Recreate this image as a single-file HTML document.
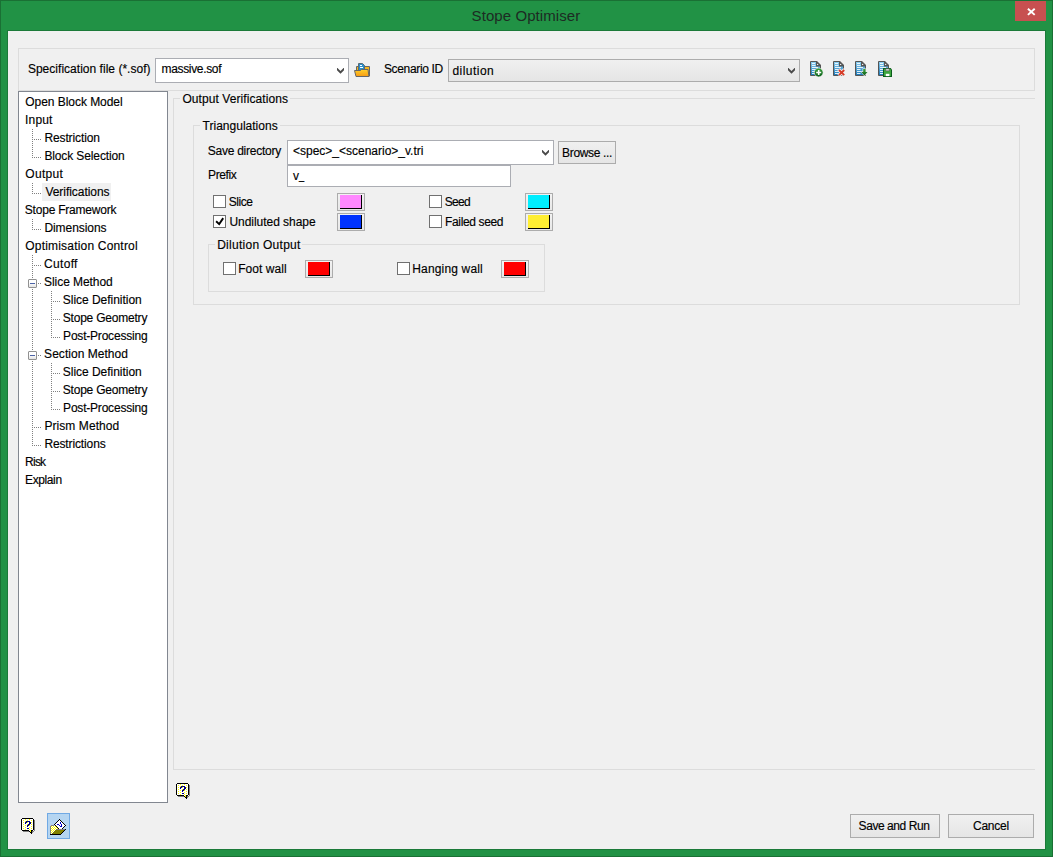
<!DOCTYPE html>
<html>
<head>
<meta charset="utf-8">
<title>Stope Optimiser</title>
<style>
html,body{margin:0;padding:0}
body{width:1053px;height:857px;position:relative;overflow:hidden;background:#219245;font-family:"Liberation Sans",sans-serif;font-size:12px;color:#000}
div,span,svg{position:absolute;box-sizing:border-box}
.frame{left:0;top:0;width:1053px;height:857px;border:1px solid #1a7034}
.client{left:7px;top:30px;width:1039px;height:820px;border:1px solid #1b7a39;background:#f0f0f0}
.close{left:1015px;top:1px;width:31px;height:20px;background:#c75050}
.t{white-space:pre;font-size:12px;line-height:16px;height:16px;-webkit-text-stroke:0.15px #000}
.t.title{font-size:15px;line-height:19px;height:19px;color:#1d2b23;-webkit-text-stroke:0}
.grp{border:1px solid #dcdcdc}
.lblbg{background:#f0f0f0}
.edit{background:#fff;border:1px solid #abadb3}
.btn{border:1px solid #acacac;background:linear-gradient(#f0f0f0,#e5e5e5)}
.tree{left:18px;top:91px;width:150px;height:712px;border:1px solid #828790;background:#fff}
.sel{left:42px;top:183px;width:69px;height:18px;background:#f0f0f0}
.cb{width:13px;height:13px;border:1px solid #707070;background:#fff}
.sw{width:28px;height:18px;border:1px solid #acacac;background:linear-gradient(#f2f2f2,#e8e8e8)}
.sw i{position:absolute;left:2px;top:1px;width:22px;height:14px;background:#000}
.sw b{position:absolute;left:2px;top:1px;width:21px;height:13px}
.hl{left:47px;top:813px;width:23px;height:26px;border:1px solid #70a9e4;background:#b5d5f1}
</style>
</head>
<body>
<div class="frame"></div>
<div class="client"></div>
<div class="close"><svg style="left:12px;top:7px" width="9" height="8" viewBox="0 0 9 8"><path d="M0.9,0.7 L7.7,6.9 M7.7,0.7 L0.9,6.9" stroke="#fff" stroke-width="1.9" fill="none"/></svg></div>

<!-- top toolbar -->
<div class="grp" style="left:18px;top:48px;width:1017px;height:43px"></div>
<div class="edit" style="left:155px;top:58px;width:194px;height:25px"></div>
<svg style="left:336px;top:67px" width="9" height="8" viewBox="0 0 9 8"><path d="M1,1 L1.45,1 L4.5,4.05 L7.55,1 L8,1 L8,3.35 L4.5,6.85 L1,3.35 Z" fill="#4a4a4a"/></svg>
<div class="btn" style="left:448px;top:59px;width:352px;height:23px"></div>
<svg style="left:787px;top:67px" width="9" height="8" viewBox="0 0 9 8"><path d="M1,1 L1.45,1 L4.5,4.05 L7.55,1 L8,1 L8,3.35 L4.5,6.85 L1,3.35 Z" fill="#4a4a4a"/></svg>
<svg style="left:0;top:0" width="0" height="0"><defs>
<linearGradient id="gb" x1="0" y1="0" x2="0" y2="1"><stop offset="0" stop-color="#8fd0f2"/><stop offset="1" stop-color="#1878b8"/></linearGradient>
<linearGradient id="gg" x1="0" y1="0" x2="0" y2="1"><stop offset="0" stop-color="#3da33d"/><stop offset="1" stop-color="#0a5c1a"/></linearGradient>
<linearGradient id="gf" x1="0" y1="0" x2="0" y2="1"><stop offset="0" stop-color="#ffd02a"/><stop offset="1" stop-color="#f79a12"/></linearGradient>
<g id="doc">
<path d="M1.5,1.5 H7.5 L11.5,5.5 V15.5 H1.5 Z" fill="url(#gb)" stroke="#555" stroke-width="1"/>
<path d="M7,1 H8 L12,5 V6.5 H7 Z" fill="#555"/>
<rect x="8.1" y="3.9" width="1.1" height="1.1" fill="#fff"/>
<path d="M3,3.5 H6 M3,5.5 H6.5 M3,7.5 H9 M3,9.5 H6.5 M3,11.5 H7 M3,13.5 H6.5" stroke="#fff" stroke-width="1" opacity="0.85"/>
</g>
</defs></svg>
<svg style="left:354px;top:62px" width="17" height="16" viewBox="0 0 17 16">
<path d="M2.5,4.5 H5 V3.5 H9 L10,4.5 H15.5 V14 H2.5 Z" fill="#f3b51e" stroke="#666" stroke-width="1"/>
<path d="M4.5,1.5 H8.5 L10.5,3.5 V9 H4.5 Z" fill="#2a8fcb" stroke="#5a6a75" stroke-width="1"/>
<path d="M6,3.5 H8 M6,5.5 H9" stroke="#fff" stroke-width="1"/>
<path d="M0.5,8.5 H6.5 L7.5,7.5 H14 L15,14.5 H2 Z" fill="url(#gf)" stroke="#666" stroke-width="1"/>
</svg>
<svg style="left:809px;top:60px" width="17" height="18" viewBox="0 0 17 18"><use href="#doc"/><circle cx="9.7" cy="12.5" r="4.4" fill="url(#gg)" stroke="#f0f0f0" stroke-width="0.6"/><path d="M7.2,12.5 H12.2 M9.7,10 V15" stroke="#fff" stroke-width="1.6"/></svg>
<svg style="left:832px;top:60px" width="17" height="18" viewBox="0 0 17 18"><use href="#doc"/><path d="M6.6,9.6 L12.6,15.6 M12.6,9.6 L6.6,15.6" stroke="#f0f0f0" stroke-width="3.6"/><path d="M7,10 L12.2,15.2 M12.2,10 L7,15.2" stroke="#d63a26" stroke-width="1.9"/></svg>
<svg style="left:854px;top:60px" width="17" height="18" viewBox="0 0 17 18"><use href="#doc"/><path d="M8.6,8.4 H12.2 V11.3 H14.6 L10.4,16.3 L6.2,11.3 H8.6 Z" fill="#f0f0f0"/><path d="M9.2,9 H11.6 V11.9 H13.5 L10.4,15.6 L7.3,11.9 H9.2 Z" fill="url(#gg)"/></svg>
<svg style="left:877px;top:60px" width="17" height="18" viewBox="0 0 17 18"><use href="#doc"/><path d="M6,8 H13.6 L15,9.4 V17 H6 Z" fill="#0b5d1c"/><path d="M7,9 H13.2 L14,9.8 V16 H7 Z" fill="#3ea63e"/><rect x="8.4" y="8.5" width="4.2" height="2.7" fill="#6c6c6c"/><rect x="9.1" y="9" width="2.8" height="1.5" fill="#d0d0d0"/><rect x="8.8" y="13.8" width="3.6" height="2.3" fill="#fff"/></svg>


<!-- tree -->
<div class="tree"></div>
<div class="sel"></div>
<svg style="left:0;top:0" width="170" height="500" shape-rendering="crispEdges"><path d="M32,129h1v1h-1zM32,131h1v1h-1zM32,133h1v1h-1zM32,135h1v1h-1zM32,137h1v1h-1zM32,139h1v1h-1zM32,141h1v1h-1zM32,143h1v1h-1zM32,145h1v1h-1zM32,147h1v1h-1zM32,149h1v1h-1zM32,151h1v1h-1zM32,153h1v1h-1zM32,155h1v1h-1zM32,157h1v1h-1zM32,183h1v1h-1zM32,185h1v1h-1zM32,187h1v1h-1zM32,189h1v1h-1zM32,191h1v1h-1zM32,193h1v1h-1zM32,219h1v1h-1zM32,221h1v1h-1zM32,223h1v1h-1zM32,225h1v1h-1zM32,227h1v1h-1zM32,229h1v1h-1zM32,255h1v1h-1zM32,257h1v1h-1zM32,259h1v1h-1zM32,261h1v1h-1zM32,263h1v1h-1zM32,265h1v1h-1zM32,267h1v1h-1zM32,269h1v1h-1zM32,271h1v1h-1zM32,273h1v1h-1zM32,275h1v1h-1zM32,277h1v1h-1zM32,289h1v1h-1zM32,291h1v1h-1zM32,293h1v1h-1zM32,295h1v1h-1zM32,297h1v1h-1zM32,299h1v1h-1zM32,301h1v1h-1zM32,303h1v1h-1zM32,305h1v1h-1zM32,307h1v1h-1zM32,309h1v1h-1zM32,311h1v1h-1zM32,313h1v1h-1zM32,315h1v1h-1zM32,317h1v1h-1zM32,319h1v1h-1zM32,321h1v1h-1zM32,323h1v1h-1zM32,325h1v1h-1zM32,327h1v1h-1zM32,329h1v1h-1zM32,331h1v1h-1zM32,333h1v1h-1zM32,335h1v1h-1zM32,337h1v1h-1zM32,339h1v1h-1zM32,341h1v1h-1zM32,343h1v1h-1zM32,345h1v1h-1zM32,347h1v1h-1zM32,349h1v1h-1zM32,361h1v1h-1zM32,363h1v1h-1zM32,365h1v1h-1zM32,367h1v1h-1zM32,369h1v1h-1zM32,371h1v1h-1zM32,373h1v1h-1zM32,375h1v1h-1zM32,377h1v1h-1zM32,379h1v1h-1zM32,381h1v1h-1zM32,383h1v1h-1zM32,385h1v1h-1zM32,387h1v1h-1zM32,389h1v1h-1zM32,391h1v1h-1zM32,393h1v1h-1zM32,395h1v1h-1zM32,397h1v1h-1zM32,399h1v1h-1zM32,401h1v1h-1zM32,403h1v1h-1zM32,405h1v1h-1zM32,407h1v1h-1zM32,409h1v1h-1zM32,411h1v1h-1zM32,413h1v1h-1zM32,415h1v1h-1zM32,417h1v1h-1zM32,419h1v1h-1zM32,421h1v1h-1zM32,423h1v1h-1zM32,425h1v1h-1zM32,427h1v1h-1zM32,429h1v1h-1zM32,431h1v1h-1zM32,433h1v1h-1zM32,435h1v1h-1zM32,437h1v1h-1zM32,439h1v1h-1zM32,441h1v1h-1zM32,443h1v1h-1zM32,445h1v1h-1zM34,139h1v1h-1zM34,157h1v1h-1zM34,193h1v1h-1zM34,229h1v1h-1zM34,265h1v1h-1zM34,427h1v1h-1zM34,445h1v1h-1zM36,139h1v1h-1zM36,157h1v1h-1zM36,193h1v1h-1zM36,229h1v1h-1zM36,265h1v1h-1zM36,427h1v1h-1zM36,445h1v1h-1zM38,139h1v1h-1zM38,157h1v1h-1zM38,193h1v1h-1zM38,229h1v1h-1zM38,265h1v1h-1zM38,283h1v1h-1zM38,355h1v1h-1zM38,427h1v1h-1zM38,445h1v1h-1zM40,139h1v1h-1zM40,157h1v1h-1zM40,193h1v1h-1zM40,229h1v1h-1zM40,265h1v1h-1zM40,283h1v1h-1zM40,355h1v1h-1zM40,427h1v1h-1zM40,445h1v1h-1zM51,291h1v1h-1zM51,293h1v1h-1zM51,295h1v1h-1zM51,297h1v1h-1zM51,299h1v1h-1zM51,301h1v1h-1zM51,303h1v1h-1zM51,305h1v1h-1zM51,307h1v1h-1zM51,309h1v1h-1zM51,311h1v1h-1zM51,313h1v1h-1zM51,315h1v1h-1zM51,317h1v1h-1zM51,319h1v1h-1zM51,321h1v1h-1zM51,323h1v1h-1zM51,325h1v1h-1zM51,327h1v1h-1zM51,329h1v1h-1zM51,331h1v1h-1zM51,333h1v1h-1zM51,335h1v1h-1zM51,337h1v1h-1zM51,363h1v1h-1zM51,365h1v1h-1zM51,367h1v1h-1zM51,369h1v1h-1zM51,371h1v1h-1zM51,373h1v1h-1zM51,375h1v1h-1zM51,377h1v1h-1zM51,379h1v1h-1zM51,381h1v1h-1zM51,383h1v1h-1zM51,385h1v1h-1zM51,387h1v1h-1zM51,389h1v1h-1zM51,391h1v1h-1zM51,393h1v1h-1zM51,395h1v1h-1zM51,397h1v1h-1zM51,399h1v1h-1zM51,401h1v1h-1zM51,403h1v1h-1zM51,405h1v1h-1zM51,407h1v1h-1zM51,409h1v1h-1zM53,301h1v1h-1zM53,319h1v1h-1zM53,337h1v1h-1zM53,373h1v1h-1zM53,391h1v1h-1zM53,409h1v1h-1zM55,301h1v1h-1zM55,319h1v1h-1zM55,337h1v1h-1zM55,373h1v1h-1zM55,391h1v1h-1zM55,409h1v1h-1zM57,301h1v1h-1zM57,319h1v1h-1zM57,337h1v1h-1zM57,373h1v1h-1zM57,391h1v1h-1zM57,409h1v1h-1zM59,301h1v1h-1zM59,319h1v1h-1zM59,337h1v1h-1zM59,373h1v1h-1zM59,391h1v1h-1zM59,409h1v1h-1z" fill="#808080"/></svg>
<div style="left:28px;top:279px;width:9px;height:9px;border:1px solid #919191;border-radius:1px;background:linear-gradient(#fff 0%,#fff 40%,#e3e3e3 100%)"><div style="left:1px;top:3px;width:5px;height:1px;background:#4b63a7"></div></div>
<div style="left:28px;top:351px;width:9px;height:9px;border:1px solid #919191;border-radius:1px;background:linear-gradient(#fff 0%,#fff 40%,#e3e3e3 100%)"><div style="left:1px;top:3px;width:5px;height:1px;background:#4b63a7"></div></div>


<!-- right panel groups -->
<div style="left:173px;top:98px;width:862px;height:1px;background:#dcdcdc"></div>
<div style="left:173px;top:98px;width:1px;height:672px;background:#dcdcdc"></div>
<div style="left:173px;top:769px;width:862px;height:1px;background:#dcdcdc"></div>
<div class="lblbg" style="left:180px;top:92px;width:110px;height:14px"></div>
<div class="grp" style="left:193px;top:125px;width:827px;height:180px"></div>
<div class="lblbg" style="left:200px;top:119px;width:80px;height:14px"></div>
<div class="grp" style="left:208px;top:244px;width:337px;height:48px"></div>
<div class="lblbg" style="left:215px;top:238px;width:87px;height:14px"></div>

<div class="edit" style="left:287px;top:140px;width:267px;height:25px"></div>
<svg style="left:541px;top:149px" width="9" height="8" viewBox="0 0 9 8"><path d="M1,1 L1.45,1 L4.5,4.05 L7.55,1 L8,1 L8,3.35 L4.5,6.85 L1,3.35 Z" fill="#4a4a4a"/></svg>
<div class="btn" style="left:558px;top:141px;width:58px;height:23px"></div>
<div class="edit" style="left:287px;top:165px;width:224px;height:22px"></div>

<div class="cb" style="left:213px;top:195px"></div>
<div class="cb" style="left:213px;top:215px"><svg style="left:0;top:0" width="11" height="11" viewBox="0 0 11 11"><path d="M2.1,5.2 L5.2,8.1 L9.2,2.1" stroke="#000" stroke-width="1.9" fill="none"/></svg></div>
<div class="cb" style="left:429px;top:195px"></div>
<div class="cb" style="left:429px;top:215px"></div>
<div class="cb" style="left:223px;top:262px"></div>
<div class="cb" style="left:397px;top:262px"></div>

<div class="sw" style="left:337px;top:193px"><i></i><b style="background:#ff88ff"></b></div>
<div class="sw" style="left:337px;top:213px"><i></i><b style="background:#0033ff"></b></div>
<div class="sw" style="left:525px;top:193px"><i></i><b style="background:#00eeff"></b></div>
<div class="sw" style="left:525px;top:213px"><i></i><b style="background:#ffee33"></b></div>
<div class="sw" style="left:305px;top:260px"><i></i><b style="background:#ff0000"></b></div>
<div class="sw" style="left:501px;top:260px"><i></i><b style="background:#ff0000"></b></div>

<!-- bottom -->
<div class="hl"></div>
<div class="btn" style="left:850px;top:814px;width:90px;height:24px"></div>
<div class="btn" style="left:948px;top:814px;width:86px;height:24px"></div>
<svg style="left:176px;top:783px" width="14" height="16" viewBox="0 0 14 16" shape-rendering="crispEdges"><path d="M1,0h1v1h-1zM2,0h1v1h-1zM3,0h1v1h-1zM4,0h1v1h-1zM5,0h1v1h-1zM6,0h1v1h-1zM7,0h1v1h-1zM8,0h1v1h-1zM9,0h1v1h-1zM10,0h1v1h-1zM11,0h1v1h-1zM0,1h1v1h-1zM12,1h1v1h-1zM0,2h1v1h-1zM12,2h1v1h-1zM0,3h1v1h-1zM12,3h1v1h-1zM0,4h1v1h-1zM12,4h1v1h-1zM0,5h1v1h-1zM12,5h1v1h-1zM0,6h1v1h-1zM12,6h1v1h-1zM0,7h1v1h-1zM12,7h1v1h-1zM0,8h1v1h-1zM12,8h1v1h-1zM0,9h1v1h-1zM12,9h1v1h-1zM0,10h1v1h-1zM12,10h1v1h-1zM0,11h1v1h-1zM12,11h1v1h-1zM1,12h1v1h-1zM2,12h1v1h-1zM3,12h1v1h-1zM4,12h1v1h-1zM5,12h1v1h-1zM6,12h1v1h-1zM7,12h1v1h-1zM10,12h1v1h-1zM11,12h1v1h-1zM8,13h1v1h-1zM10,13h1v1h-1zM9,14h1v1h-1zM10,14h1v1h-1zM10,15h1v1h-1z" fill="#000"/><path d="M1,1h1v1h-1zM2,1h1v1h-1zM3,1h1v1h-1zM5,1h1v1h-1zM6,1h1v1h-1zM7,1h1v1h-1zM9,1h1v1h-1zM10,1h1v1h-1zM11,1h1v1h-1zM1,2h1v1h-1zM3,2h1v1h-1zM4,2h1v1h-1zM5,2h1v1h-1zM7,2h1v1h-1zM8,2h1v1h-1zM9,2h1v1h-1zM11,2h1v1h-1zM1,3h1v1h-1zM2,3h1v1h-1zM3,3h1v1h-1zM9,3h1v1h-1zM10,3h1v1h-1zM11,3h1v1h-1zM1,4h1v1h-1zM3,4h1v1h-1zM7,4h1v1h-1zM11,4h1v1h-1zM1,5h1v1h-1zM2,5h1v1h-1zM3,5h1v1h-1zM5,5h1v1h-1zM6,5h1v1h-1zM7,5h1v1h-1zM10,5h1v1h-1zM11,5h1v1h-1zM1,6h1v1h-1zM3,6h1v1h-1zM4,6h1v1h-1zM5,6h1v1h-1zM9,6h1v1h-1zM11,6h1v1h-1zM1,7h1v1h-1zM2,7h1v1h-1zM3,7h1v1h-1zM5,7h1v1h-1zM9,7h1v1h-1zM10,7h1v1h-1zM11,7h1v1h-1zM1,8h1v1h-1zM3,8h1v1h-1zM4,8h1v1h-1zM5,8h1v1h-1zM7,8h1v1h-1zM8,8h1v1h-1zM9,8h1v1h-1zM11,8h1v1h-1zM1,9h1v1h-1zM2,9h1v1h-1zM3,9h1v1h-1zM5,9h1v1h-1zM6,9h1v1h-1zM7,9h1v1h-1zM9,9h1v1h-1zM10,9h1v1h-1zM11,9h1v1h-1zM1,10h1v1h-1zM3,10h1v1h-1zM4,10h1v1h-1zM5,10h1v1h-1zM8,10h1v1h-1zM9,10h1v1h-1zM11,10h1v1h-1zM1,11h1v1h-1zM2,11h1v1h-1zM3,11h1v1h-1zM5,11h1v1h-1zM6,11h1v1h-1zM7,11h1v1h-1zM9,11h1v1h-1zM10,11h1v1h-1zM11,11h1v1h-1zM8,12h1v1h-1z" fill="#fff"/><path d="M4,1h1v1h-1zM8,1h1v1h-1zM2,2h1v1h-1zM6,2h1v1h-1zM10,2h1v1h-1zM4,3h1v1h-1zM2,4h1v1h-1zM6,4h1v1h-1zM10,4h1v1h-1zM2,6h1v1h-1zM6,6h1v1h-1zM10,6h1v1h-1zM4,7h1v1h-1zM8,7h1v1h-1zM2,8h1v1h-1zM10,8h1v1h-1zM4,9h1v1h-1zM8,9h1v1h-1zM2,10h1v1h-1zM10,10h1v1h-1zM4,11h1v1h-1zM8,11h1v1h-1zM9,12h1v1h-1zM9,13h1v1h-1z" fill="#ffff00"/><path d="M13,2h1v1h-1zM13,3h1v1h-1zM13,4h1v1h-1zM13,5h1v1h-1zM13,6h1v1h-1zM13,7h1v1h-1zM13,8h1v1h-1zM13,9h1v1h-1zM13,10h1v1h-1zM13,11h1v1h-1zM13,12h1v1h-1zM2,13h1v1h-1zM3,13h1v1h-1zM4,13h1v1h-1zM5,13h1v1h-1zM6,13h1v1h-1zM7,13h1v1h-1zM11,13h1v1h-1zM12,13h1v1h-1zM11,14h1v1h-1z" fill="#808080"/><path d="M5,3h1v1h-1zM6,3h1v1h-1zM7,3h1v1h-1zM8,3h1v1h-1zM4,4h1v1h-1zM5,4h1v1h-1zM8,4h1v1h-1zM9,4h1v1h-1zM4,5h1v1h-1zM8,5h1v1h-1zM9,5h1v1h-1zM7,6h1v1h-1zM8,6h1v1h-1zM6,7h1v1h-1zM7,7h1v1h-1zM6,8h1v1h-1zM6,10h1v1h-1zM7,10h1v1h-1z" fill="#000080"/></svg>
<svg style="left:21px;top:818px" width="14" height="16" viewBox="0 0 14 16" shape-rendering="crispEdges"><path d="M1,0h1v1h-1zM2,0h1v1h-1zM3,0h1v1h-1zM4,0h1v1h-1zM5,0h1v1h-1zM6,0h1v1h-1zM7,0h1v1h-1zM8,0h1v1h-1zM9,0h1v1h-1zM10,0h1v1h-1zM11,0h1v1h-1zM0,1h1v1h-1zM12,1h1v1h-1zM0,2h1v1h-1zM12,2h1v1h-1zM0,3h1v1h-1zM12,3h1v1h-1zM0,4h1v1h-1zM12,4h1v1h-1zM0,5h1v1h-1zM12,5h1v1h-1zM0,6h1v1h-1zM12,6h1v1h-1zM0,7h1v1h-1zM12,7h1v1h-1zM0,8h1v1h-1zM12,8h1v1h-1zM0,9h1v1h-1zM12,9h1v1h-1zM0,10h1v1h-1zM12,10h1v1h-1zM0,11h1v1h-1zM12,11h1v1h-1zM1,12h1v1h-1zM2,12h1v1h-1zM3,12h1v1h-1zM4,12h1v1h-1zM5,12h1v1h-1zM6,12h1v1h-1zM7,12h1v1h-1zM10,12h1v1h-1zM11,12h1v1h-1zM8,13h1v1h-1zM10,13h1v1h-1zM9,14h1v1h-1zM10,14h1v1h-1zM10,15h1v1h-1z" fill="#000"/><path d="M1,1h1v1h-1zM2,1h1v1h-1zM3,1h1v1h-1zM5,1h1v1h-1zM6,1h1v1h-1zM7,1h1v1h-1zM9,1h1v1h-1zM10,1h1v1h-1zM11,1h1v1h-1zM1,2h1v1h-1zM3,2h1v1h-1zM4,2h1v1h-1zM5,2h1v1h-1zM7,2h1v1h-1zM8,2h1v1h-1zM9,2h1v1h-1zM11,2h1v1h-1zM1,3h1v1h-1zM2,3h1v1h-1zM3,3h1v1h-1zM9,3h1v1h-1zM10,3h1v1h-1zM11,3h1v1h-1zM1,4h1v1h-1zM3,4h1v1h-1zM7,4h1v1h-1zM11,4h1v1h-1zM1,5h1v1h-1zM2,5h1v1h-1zM3,5h1v1h-1zM5,5h1v1h-1zM6,5h1v1h-1zM7,5h1v1h-1zM10,5h1v1h-1zM11,5h1v1h-1zM1,6h1v1h-1zM3,6h1v1h-1zM4,6h1v1h-1zM5,6h1v1h-1zM9,6h1v1h-1zM11,6h1v1h-1zM1,7h1v1h-1zM2,7h1v1h-1zM3,7h1v1h-1zM5,7h1v1h-1zM9,7h1v1h-1zM10,7h1v1h-1zM11,7h1v1h-1zM1,8h1v1h-1zM3,8h1v1h-1zM4,8h1v1h-1zM5,8h1v1h-1zM7,8h1v1h-1zM8,8h1v1h-1zM9,8h1v1h-1zM11,8h1v1h-1zM1,9h1v1h-1zM2,9h1v1h-1zM3,9h1v1h-1zM5,9h1v1h-1zM6,9h1v1h-1zM7,9h1v1h-1zM9,9h1v1h-1zM10,9h1v1h-1zM11,9h1v1h-1zM1,10h1v1h-1zM3,10h1v1h-1zM4,10h1v1h-1zM5,10h1v1h-1zM8,10h1v1h-1zM9,10h1v1h-1zM11,10h1v1h-1zM1,11h1v1h-1zM2,11h1v1h-1zM3,11h1v1h-1zM5,11h1v1h-1zM6,11h1v1h-1zM7,11h1v1h-1zM9,11h1v1h-1zM10,11h1v1h-1zM11,11h1v1h-1zM8,12h1v1h-1z" fill="#fff"/><path d="M4,1h1v1h-1zM8,1h1v1h-1zM2,2h1v1h-1zM6,2h1v1h-1zM10,2h1v1h-1zM4,3h1v1h-1zM2,4h1v1h-1zM6,4h1v1h-1zM10,4h1v1h-1zM2,6h1v1h-1zM6,6h1v1h-1zM10,6h1v1h-1zM4,7h1v1h-1zM8,7h1v1h-1zM2,8h1v1h-1zM10,8h1v1h-1zM4,9h1v1h-1zM8,9h1v1h-1zM2,10h1v1h-1zM10,10h1v1h-1zM4,11h1v1h-1zM8,11h1v1h-1zM9,12h1v1h-1zM9,13h1v1h-1z" fill="#ffff00"/><path d="M13,2h1v1h-1zM13,3h1v1h-1zM13,4h1v1h-1zM13,5h1v1h-1zM13,6h1v1h-1zM13,7h1v1h-1zM13,8h1v1h-1zM13,9h1v1h-1zM13,10h1v1h-1zM13,11h1v1h-1zM13,12h1v1h-1zM2,13h1v1h-1zM3,13h1v1h-1zM4,13h1v1h-1zM5,13h1v1h-1zM6,13h1v1h-1zM7,13h1v1h-1zM11,13h1v1h-1zM12,13h1v1h-1zM11,14h1v1h-1z" fill="#808080"/><path d="M5,3h1v1h-1zM6,3h1v1h-1zM7,3h1v1h-1zM8,3h1v1h-1zM4,4h1v1h-1zM5,4h1v1h-1zM8,4h1v1h-1zM9,4h1v1h-1zM4,5h1v1h-1zM8,5h1v1h-1zM9,5h1v1h-1zM7,6h1v1h-1zM8,6h1v1h-1zM6,7h1v1h-1zM7,7h1v1h-1zM6,8h1v1h-1zM6,10h1v1h-1zM7,10h1v1h-1z" fill="#000080"/></svg>
<svg style="left:50px;top:819px" width="17" height="17" viewBox="0 0 17 17" shape-rendering="crispEdges"><path d="M9,0h1v1h-1zM8,1h1v1h-1zM10,1h1v1h-1zM7,2h1v1h-1zM11,2h1v1h-1zM6,3h1v1h-1zM12,3h1v1h-1zM5,4h1v1h-1zM13,4h1v1h-1zM4,5h1v1h-1zM14,5h1v1h-1zM5,6h1v1h-1zM15,6h1v1h-1zM6,7h1v1h-1zM14,7h1v1h-1zM7,8h1v1h-1zM13,8h1v1h-1zM8,9h1v1h-1zM12,9h1v1h-1zM15,10h1v1h-1zM14,11h1v1h-1zM13,12h1v1h-1zM12,13h1v1h-1zM11,14h1v1h-1zM0,15h1v1h-1zM1,15h1v1h-1zM2,15h1v1h-1zM3,15h1v1h-1zM4,15h1v1h-1zM5,15h1v1h-1zM6,15h1v1h-1zM7,15h1v1h-1zM8,15h1v1h-1zM9,15h1v1h-1zM10,15h1v1h-1z" fill="#000"/><path d="M9,1h1v1h-1zM8,2h1v1h-1zM9,2h1v1h-1zM10,2h1v1h-1zM7,3h1v1h-1zM8,3h1v1h-1zM9,3h1v1h-1zM11,3h1v1h-1zM6,4h1v1h-1zM7,4h1v1h-1zM8,4h1v1h-1zM9,4h1v1h-1zM11,4h1v1h-1zM12,4h1v1h-1zM5,5h1v1h-1zM6,5h1v1h-1zM9,5h1v1h-1zM10,5h1v1h-1zM12,5h1v1h-1zM13,5h1v1h-1zM6,6h1v1h-1zM7,6h1v1h-1zM8,6h1v1h-1zM10,6h1v1h-1zM12,6h1v1h-1zM13,6h1v1h-1zM14,6h1v1h-1zM2,7h1v1h-1zM4,7h1v1h-1zM7,7h1v1h-1zM8,7h1v1h-1zM9,7h1v1h-1zM12,7h1v1h-1zM13,7h1v1h-1zM1,8h1v1h-1zM3,8h1v1h-1zM5,8h1v1h-1zM8,8h1v1h-1zM9,8h1v1h-1zM10,8h1v1h-1zM11,8h1v1h-1zM12,8h1v1h-1zM2,9h1v1h-1zM4,9h1v1h-1zM6,9h1v1h-1zM9,9h1v1h-1zM10,9h1v1h-1zM11,9h1v1h-1zM1,10h1v1h-1zM3,10h1v1h-1zM5,10h1v1h-1zM2,11h1v1h-1zM4,11h1v1h-1zM1,12h1v1h-1zM3,12h1v1h-1zM2,13h1v1h-1zM1,14h1v1h-1z" fill="#fff"/><path d="M10,3h1v1h-1zM10,4h1v1h-1zM7,5h1v1h-1zM8,5h1v1h-1zM11,5h1v1h-1zM9,6h1v1h-1zM11,6h1v1h-1zM10,7h1v1h-1zM11,7h1v1h-1z" fill="#0000c8"/><path d="M1,6h1v1h-1zM2,6h1v1h-1zM3,6h1v1h-1zM0,7h1v1h-1zM0,8h1v1h-1zM0,9h1v1h-1zM0,10h1v1h-1zM6,10h1v1h-1zM7,10h1v1h-1zM8,10h1v1h-1zM9,10h1v1h-1zM10,10h1v1h-1zM11,10h1v1h-1zM12,10h1v1h-1zM13,10h1v1h-1zM14,10h1v1h-1zM0,11h1v1h-1zM0,12h1v1h-1zM0,13h1v1h-1zM0,14h1v1h-1z" fill="#808080"/><path d="M1,7h1v1h-1zM3,7h1v1h-1zM5,7h1v1h-1zM2,8h1v1h-1zM4,8h1v1h-1zM6,8h1v1h-1zM1,9h1v1h-1zM3,9h1v1h-1zM5,9h1v1h-1zM7,9h1v1h-1zM2,10h1v1h-1zM4,10h1v1h-1zM1,11h1v1h-1zM3,11h1v1h-1zM2,12h1v1h-1zM1,13h1v1h-1z" fill="#ffff00"/><path d="M5,11h1v1h-1zM6,11h1v1h-1zM7,11h1v1h-1zM8,11h1v1h-1zM9,11h1v1h-1zM10,11h1v1h-1zM11,11h1v1h-1zM12,11h1v1h-1zM13,11h1v1h-1zM4,12h1v1h-1zM5,12h1v1h-1zM6,12h1v1h-1zM7,12h1v1h-1zM8,12h1v1h-1zM9,12h1v1h-1zM10,12h1v1h-1zM11,12h1v1h-1zM12,12h1v1h-1zM3,13h1v1h-1zM4,13h1v1h-1zM5,13h1v1h-1zM6,13h1v1h-1zM7,13h1v1h-1zM8,13h1v1h-1zM9,13h1v1h-1zM10,13h1v1h-1zM11,13h1v1h-1zM2,14h1v1h-1zM3,14h1v1h-1zM4,14h1v1h-1zM5,14h1v1h-1zM6,14h1v1h-1zM7,14h1v1h-1zM8,14h1v1h-1zM9,14h1v1h-1zM10,14h1v1h-1z" fill="#808000"/></svg>


<span class="t title" style="left:471.60px;top:6px;letter-spacing:0.079px">Stope Optimiser</span>
<span class="t" style="left:27.90px;top:61px;letter-spacing:0.024px">Specification file (*.sof)</span>
<span class="t" style="left:161.50px;top:61px;letter-spacing:-0.330px">massive.sof</span>
<span class="t" style="left:383.90px;top:61px;letter-spacing:-0.330px">Scenario ID</span>
<span class="t" style="left:452.40px;top:63px;letter-spacing:0.471px">dilution</span>
<span class="t ti" style="left:25.30px;top:94px;letter-spacing:-0.047px">Open Block Model</span>
<span class="t ti" style="left:25.10px;top:112px;letter-spacing:0.150px">Input</span>
<span class="t ti" style="left:44.40px;top:130px;letter-spacing:-0.110px">Restriction</span>
<span class="t ti" style="left:44.40px;top:148px;letter-spacing:-0.121px">Block Selection</span>
<span class="t ti" style="left:25.30px;top:166px;letter-spacing:0.320px">Output</span>
<span class="t ti" style="left:45.40px;top:184px;letter-spacing:-0.042px">Verifications</span>
<span class="t ti" style="left:24.80px;top:202px;letter-spacing:-0.214px">Stope Framework</span>
<span class="t ti" style="left:44.40px;top:220px;letter-spacing:-0.056px">Dimensions</span>
<span class="t ti" style="left:25.30px;top:238px;letter-spacing:0.189px">Optimisation Control</span>
<span class="t ti" style="left:44.10px;top:256px;letter-spacing:0.300px">Cutoff</span>
<span class="t ti" style="left:44.10px;top:274px;letter-spacing:-0.073px">Slice Method</span>
<span class="t ti" style="left:62.80px;top:292px;letter-spacing:-0.027px">Slice Definition</span>
<span class="t ti" style="left:62.80px;top:310px;letter-spacing:-0.215px">Stope Geometry</span>
<span class="t ti" style="left:63.10px;top:328px;letter-spacing:-0.207px">Post-Processing</span>
<span class="t ti" style="left:44.10px;top:346px;letter-spacing:0.038px">Section Method</span>
<span class="t ti" style="left:62.80px;top:364px;letter-spacing:-0.027px">Slice Definition</span>
<span class="t ti" style="left:62.80px;top:382px;letter-spacing:-0.215px">Stope Geometry</span>
<span class="t ti" style="left:63.10px;top:400px;letter-spacing:-0.207px">Post-Processing</span>
<span class="t ti" style="left:44.40px;top:418px;letter-spacing:0.073px">Prism Method</span>
<span class="t ti" style="left:44.40px;top:436px;letter-spacing:-0.127px">Restrictions</span>
<span class="t ti" style="left:25.10px;top:454px;letter-spacing:-0.767px">Risk</span>
<span class="t ti" style="left:25.10px;top:472px;letter-spacing:-0.400px">Explain</span>
<span class="t" style="left:182.40px;top:91px;letter-spacing:0.084px">Output Verifications</span>
<span class="t" style="left:202.60px;top:118px;letter-spacing:0.008px">Triangulations</span>
<span class="t" style="left:207.70px;top:143px;letter-spacing:-0.238px">Save directory</span>
<span class="t" style="left:293.00px;top:143px;letter-spacing:-0.005px">&lt;spec&gt;_&lt;scenario&gt;_v.tri</span>
<span class="t" style="left:562.10px;top:145px;letter-spacing:-0.344px">Browse ...</span>
<span class="t" style="left:208.10px;top:167px;letter-spacing:-0.420px">Prefix</span>
<span class="t" style="left:292.90px;top:168px">v</span>
<span class="t" style="left:298.80px;top:167px;transform:scaleX(0.771);transform-origin:0 0">_</span>
<span class="t" style="left:228.80px;top:194px;letter-spacing:-0.450px">Slice</span>
<span class="t" style="left:229.40px;top:214px;letter-spacing:-0.036px">Undiluted shape</span>
<span class="t" style="left:444.80px;top:194px;letter-spacing:-0.733px">Seed</span>
<span class="t" style="left:445.10px;top:214px;letter-spacing:-0.370px">Failed seed</span>
<span class="t" style="left:217.20px;top:237px;letter-spacing:0.271px">Dilution Output</span>
<span class="t" style="left:238.20px;top:261px;letter-spacing:0.062px">Foot wall</span>
<span class="t" style="left:412.30px;top:261px;letter-spacing:0.155px">Hanging wall</span>
<span class="t" style="left:858.60px;top:818px;letter-spacing:-0.436px">Save and Run</span>
<span class="t" style="left:973.00px;top:818px;letter-spacing:-0.240px">Cancel</span>
</body>
</html>
